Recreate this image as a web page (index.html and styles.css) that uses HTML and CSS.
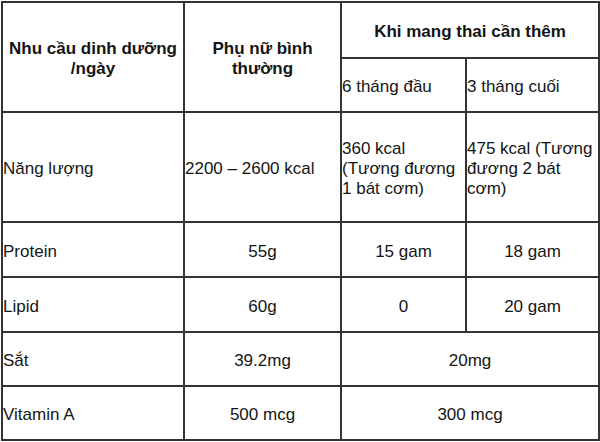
FILE: index.html
```html
<!DOCTYPE html>
<html lang="vi">
<head>
<meta charset="utf-8">
<title>Nhu cầu dinh dưỡng</title>
<link rel="stylesheet" href="styles.css">
</head>
<body>
<table class="nutri">
  <colgroup>
    <col class="c1">
    <col class="c2">
    <col class="c3">
    <col class="c4">
  </colgroup>
  <tr class="h1">
    <th rowspan="2">Nhu cầu dinh dưỡng /ngày</th>
    <th rowspan="2">Phụ nữ bình thường</th>
    <th colspan="2">Khi mang thai cần thêm</th>
  </tr>
  <tr class="h2">
    <td>6 tháng đầu</td>
    <td>3 tháng cuối</td>
  </tr>
  <tr class="r-energy">
    <td>Năng lượng</td>
    <td>2200 – 2600 kcal</td>
    <td>360 kcal<br>(Tương đương<br>1 bát cơm)</td>
    <td>475 kcal (Tương<br>đương 2 bát<br>cơm)</td>
  </tr>
  <tr class="r-a">
    <td>Protein</td>
    <td class="mid">55g</td>
    <td class="mid">15 gam</td>
    <td class="mid">18 gam</td>
  </tr>
  <tr class="r-a">
    <td>Lipid</td>
    <td class="mid">60g</td>
    <td class="mid">0</td>
    <td class="mid">20 gam</td>
  </tr>
  <tr class="r-b">
    <td>Sắt</td>
    <td class="mid">39.2mg</td>
    <td class="mid" colspan="2">20mg</td>
  </tr>
  <tr class="r-b">
    <td>Vitamin A</td>
    <td class="mid">500 mcg</td>
    <td class="mid" colspan="2">300 mcg</td>
  </tr>
</table>
</body>
</html>
```

FILE: styles.css
```css
html, body {
  margin: 0;
  padding: 0;
  background: #ffffff;
}
body {
  overflow: hidden;
}
.nutri {
  margin: 1px 0 0 1px;
  border-collapse: collapse;
  table-layout: fixed;
  width: 597px;
  font-family: "Liberation Sans", Arial, sans-serif;
  font-size: 17px;
  line-height: 20px;
  color: #151515;
}
.c1 { width: 182px; }
.c2 { width: 157px; }
.c3 { width: 125px; }
.c4 { width: 133px; }
.nutri th,
.nutri td {
  border: 2px solid #333333;
  padding: 4px 0 0 0;
  vertical-align: middle;
  text-align: left;
}
.nutri th {
  font-weight: bold;
  text-align: center;
  padding: 4px 2px 0;
}
.h1 { height: 56px; }
.h2 { height: 54px; }
.r-energy { height: 110px; }
.r-a { height: 55px; }
.r-b { height: 54px; }
.nutri td.mid {
  text-align: center;
}
```
